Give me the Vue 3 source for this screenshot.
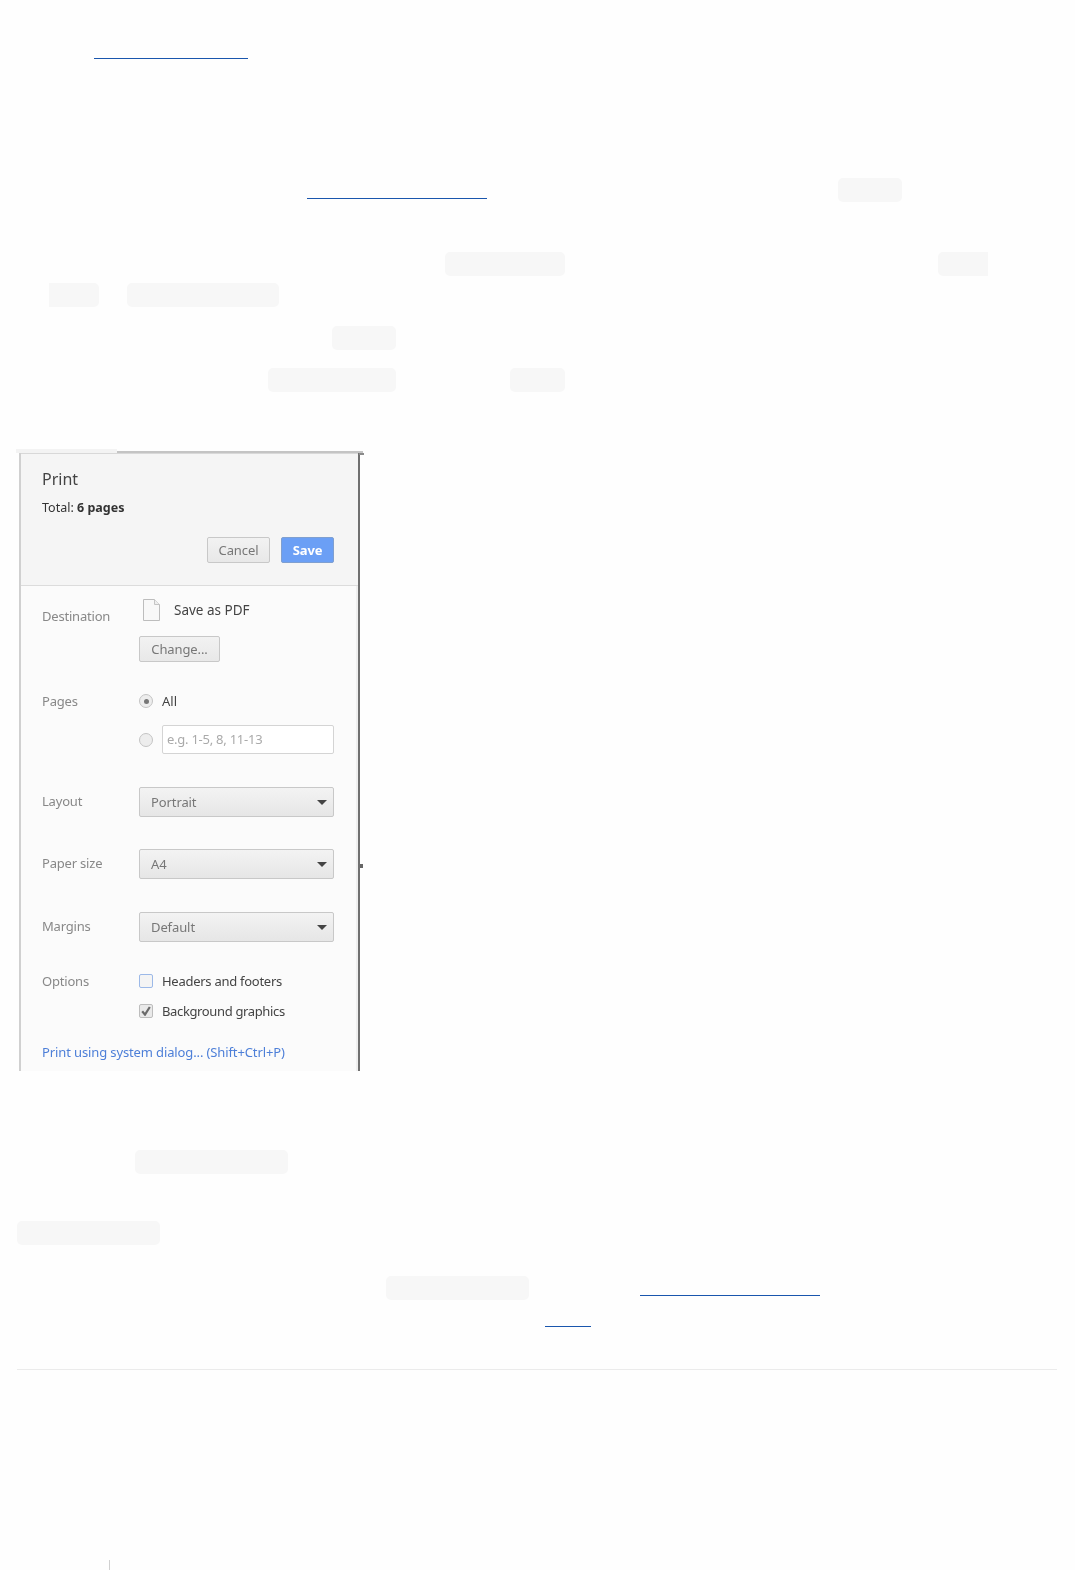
<template>
  <div class="page">
    <div v-for="line in lines" :key="line.y" class="line" :style="{ top: line.y + 'px' }">
      <span
        v-for="item in line.items"
        :key="item.x"
        :class="item.cls"
        :style="{ left: item.x + 'px', width: item.w + 'px' }"
      ></span>
    </div>

    <section class="shot">
      <div class="shot-top"><span class="shot-tab"></span><span class="shot-edge"></span></div>
      <div class="dialog">
        <header class="dialog-head">
          <h1 class="title">Print</h1>
          <p class="total">Total: <b>6 pages</b></p>
          <div class="actions">
            <button class="btn">Cancel</button>
            <button class="btn btn-save">Save</button>
          </div>
        </header>

        <div class="dialog-body">
          <div class="row row-dest">
            <span class="label">Destination</span>
            <div class="field">
              <div class="dest">
                <svg class="doc" width="19" height="24" viewBox="0 0 19 24">
                  <path d="M1.5 1.5H12.5L17.5 6.5V22.5H1.5Z" fill="#f8f8f8" stroke="#bdbdbd" />
                  <path d="M12.5 1.5V6.5H17.5" fill="#eee" stroke="#c4c4c4" />
                </svg>
                <span class="dest-name">Save as PDF</span>
              </div>
              <button class="btn btn-change">Change...</button>
            </div>
          </div>

          <div class="row row-pages">
            <span class="label">Pages</span>
            <div class="field">
              <div class="opt">
                <span class="radio radio-on"></span>
                <span class="opt-text">All</span>
              </div>
              <div class="opt opt-range">
                <span class="radio"></span>
                <span class="range">e.g. 1-5, 8, 11-13</span>
              </div>
            </div>
          </div>

          <div v-for="sel in selects" :key="sel.label" class="row row-select">
            <span class="label">{{ sel.label }}</span>
            <div class="select">
              <span>{{ sel.value }}</span>
              <i class="caret"></i>
            </div>
          </div>

          <div class="row row-options">
            <span class="label">Options</span>
            <div class="field">
              <div class="opt">
                <span class="check check-focus"></span>
                <span class="opt-text opt-headers">Headers and footers</span>
              </div>
              <div class="opt opt-bg">
                <span class="check">
                  <svg width="10" height="10" viewBox="0 0 10 10">
                    <path d="M1.2 5.2L4 8.6L8.8 1" fill="none" stroke="#6a6a6a" stroke-width="2.2" />
                  </svg>
                </span>
                <span class="opt-text opt-graphics">Background graphics</span>
              </div>
            </div>
          </div>

          <a class="sys-link">Print using system dialog... (Shift+Ctrl+P)</a>
        </div>
        <span class="corner"></span>
        <span class="notch"></span>
      </div>
    </section>

    <div class="rule"></div>
    <div class="tick"></div>
  </div>
</template>

<script setup>
const chip = (x, w) => ({ cls: 'chip', x, w })
const chipR = (x, w) => ({ cls: 'chip chip-open-right', x, w })
const chipL = (x, w) => ({ cls: 'chip chip-open-left', x, w })
const link = (x, w) => ({ cls: 'link', x, w })

// blanked article text: only the inline code chips and link underlines remain
const lines = [
  { y: 38, items: [link(94, 154)] },
  { y: 178, items: [link(307, 180), chip(838, 64)] },
  { y: 252, items: [chip(445, 120), chipR(938, 50)] },
  { y: 283, items: [chipL(49, 50), chip(127, 152)] },
  { y: 325.5, items: [chip(332, 64)] },
  { y: 368, items: [chip(268, 128), chip(510, 55)] },
  { y: 1150, items: [chip(135, 153)] },
  { y: 1221, items: [chip(17, 143)] },
  { y: 1275.5, items: [chip(386, 143)] },
  { y: 1275, items: [link(640, 180)] },
  { y: 1306, items: [link(545, 46)] }
]

const selects = [
  { label: 'Layout', value: 'Portrait' },
  { label: 'Paper size', value: 'A4' },
  { label: 'Margins', value: 'Default' }
]
</script>

<style>
html,
body {
  margin: 0;
  background: #fefefe;
}
</style>

<style scoped>
.page {
  position: relative;
  height: 1570px;
  overflow: hidden;
  background: #fefefe;
  font-family: "Noto Sans", "Open Sans", sans-serif;
}

.line {
  position: absolute;
  left: 0;
  right: 0;
  height: 24px;
}

.chip {
  position: absolute;
  top: 0;
  height: 24.2px;
  background: #f7f7f7;
  border-radius: 5px;
}

.chip-open-right {
  border-radius: 5px 0 0 5px;
}

.chip-open-left {
  border-radius: 0 5px 5px 0;
}

.link {
  position: absolute;
  top: 20px;
  height: 1px;
  background: #1a56ad;
}

/* screenshot */
.shot {
  position: absolute;
  left: 16px;
  top: 449px;
  width: 347px;
}

.shot-top {
  display: flex;
  height: 4px;
}

.shot-tab {
  width: 101px;
  background: #f3f3f3;
}

.shot-edge {
  flex: 1;
  height: 2px;
  margin-top: 2px;
  background: #c4c4c4;
}

.dialog {
  position: relative;
  width: 341px;
  height: 618px;
  margin-left: 3px;
  box-sizing: border-box;
  border-left: 2px solid #d0d0d0;
  border-right: 2px solid #707070;
  background: #fbfbfb;
  box-shadow: inset -2px 0 0 #efefef, inset 0 1px 0 #d8d8d8;
  color: #555;
  font-size: 13px;
  filter: blur(0.3px);
}

.dialog-head {
  height: 133px;
  box-sizing: border-box;
  padding: 15px 24px 0 21px;
  background: #f5f5f5;
  border-top: 1px solid #d8d8d8;
  border-bottom: 1px solid #dcdcdc;
}

.title {
  margin: 0;
  font-size: 16px;
  font-weight: 400;
  line-height: 20px;
  color: #444;
}

.total {
  margin: 10px 0 0;
  line-height: 18px;
  font-size: 12.5px;
  color: #333;
}

.actions {
  display: flex;
  justify-content: flex-end;
  gap: 11px;
  margin-top: 20px;
}

.btn {
  height: 26px;
  width: 63px;
  padding: 0;
  box-sizing: border-box;
  border: 1px solid #c8c8c8;
  border-radius: 2px;
  background: linear-gradient(#f2f2f2, #e8e8e8);
  color: #777;
  font: inherit;
  font-size: 13px;
  letter-spacing: -0.1px;
}

.btn-save {
  width: 53px;
  border-color: #7f9fd0;
  background: #6b9ff5;
  color: #fff;
  font-weight: 700;
}

.btn-change {
  width: 81px;
  display: block;
  margin-top: 14px;
}

.dialog-body {
  padding: 12px 24px 0 21px;
}

.row {
  display: flex;
}

.label {
  flex: 0 0 97px;
  color: #888;
  line-height: 18px;
  letter-spacing: -0.2px;
}

.field {
  flex: 1;
}

.row-dest .label {
  padding-top: 9px;
}

.dest {
  display: flex;
  align-items: center;
  height: 24px;
  padding-left: 3px;
}

.dest-name {
  margin-left: 13px;
  color: #444;
  font-size: 13.5px;
}

.row-pages {
  margin-top: 30px;
}

.opt {
  display: flex;
  align-items: center;
  height: 18px;
}

.opt-text {
  margin-left: 9px;
  color: #444;
}

.opt-headers {
  letter-spacing: -0.27px;
}

.opt-graphics {
  letter-spacing: -0.36px;
}

.opt-range {
  height: 29px;
  margin-top: 15px;
}

.radio {
  flex: none;
  width: 14px;
  height: 14px;
  box-sizing: border-box;
  border: 1px solid #c4c4c4;
  border-radius: 50%;
  background: #ededed;
  display: flex;
  align-items: center;
  justify-content: center;
}

.radio-on::after {
  content: "";
  width: 5px;
  height: 5px;
  border-radius: 50%;
  background: #777;
}

.range {
  flex: 1;
  height: 29px;
  margin-left: 9px;
  box-sizing: border-box;
  border: 1px solid #d4d4d4;
  border-radius: 2px;
  background: #fff;
  padding-left: 4px;
  line-height: 27px;
  color: #aaa;
  letter-spacing: -0.25px;
}

.row-select {
  height: 30px;
  margin-bottom: 32px;
  align-items: center;
}

.row-select .label {
  padding-bottom: 2px;
}

.row-pages + .row-select {
  margin-top: 33px;
}

/* paper size to margins is one px wider in the reference */
.row-pages + .row-select + .row-select {
  margin-bottom: 33px;
}

.select {
  flex: 1;
  height: 30px;
  box-sizing: border-box;
  display: flex;
  align-items: center;
  justify-content: space-between;
  padding: 0 6px 0 11px;
  border: 1px solid #c8c8c8;
  border-radius: 2px;
  background: linear-gradient(#f3f3f3, #e6e6e6);
  color: #777;
  letter-spacing: -0.1px;
}

.caret {
  width: 0;
  height: 0;
  border-left: 5px solid transparent;
  border-right: 5px solid transparent;
  border-top: 5px solid #444;
}

.row-options {
  margin-top: -2px;
}

.check {
  flex: none;
  width: 14px;
  height: 14px;
  box-sizing: border-box;
  border: 1px solid #bdbdbd;
  border-radius: 2px;
  background: #e9e9e9;
  display: flex;
  align-items: center;
  justify-content: center;
}

.check-focus {
  border-color: #9cb9e8;
  background: #f4f4f4;
}

.opt-bg {
  margin-top: 12px;
}

.sys-link {
  display: block;
  margin-top: 23px;
  line-height: 18px;
  color: #4d7fd8;
  letter-spacing: -0.12px;
}

.corner {
  position: absolute;
  right: -6px;
  top: 0;
  width: 5px;
  height: 2px;
  background: #8a8a8a;
}

.notch {
  position: absolute;
  right: -5px;
  top: 411px;
  width: 3px;
  height: 4px;
  background: #666;
}

.rule {
  position: absolute;
  left: 17px;
  top: 1369px;
  width: 1040px;
  height: 1px;
  background: #ebebeb;
}

.tick {
  position: absolute;
  left: 109px;
  top: 1560px;
  width: 1px;
  height: 10px;
  background: #d0d0d0;
}
</style>
